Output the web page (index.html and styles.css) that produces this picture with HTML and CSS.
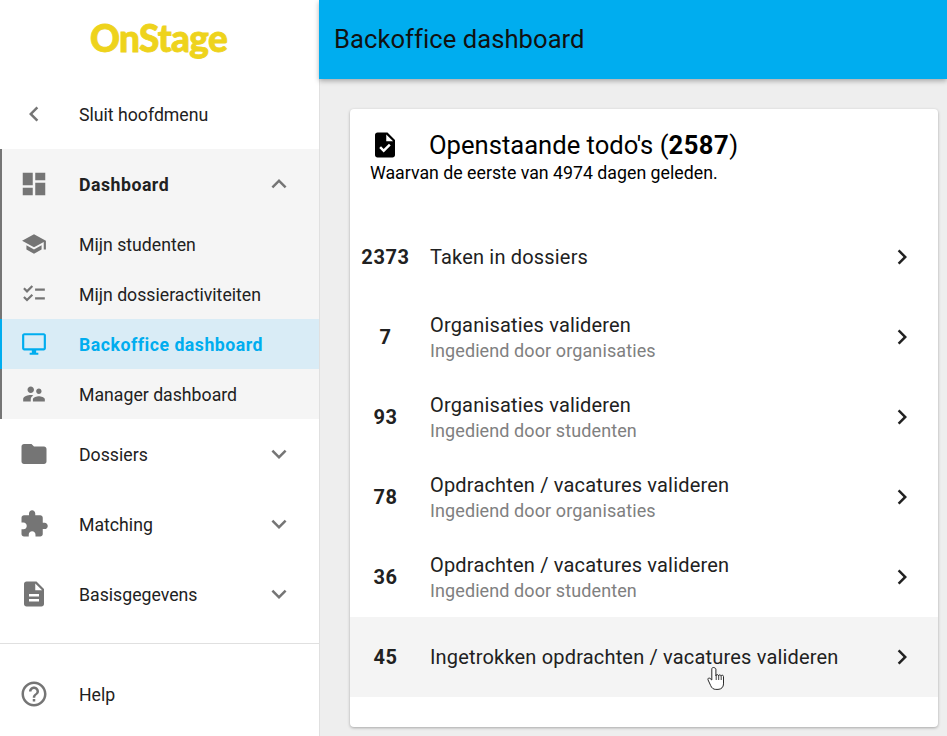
FILE: index.html
```html
<!DOCTYPE html>
<html lang="nl">
<head>
<meta charset="utf-8">
<title>Backoffice dashboard</title>
<link rel="stylesheet" href="styles.css">
</head>
<body>
<div class="app">
  <aside class="sidebar">
    <div class="logo"><span class="logo-text">OnStage</span></div>
    <a class="nav-item top"><span class="ico"><svg viewBox="0 0 24 24"><path d="M15.41 7.41L14 6l-6 6 6 6 1.41-1.41L10.83 12z"/></svg></span><span class="label">Sluit hoofdmenu</span></a>
    <div class="group">
      <a class="nav-item top"><span class="ico"><svg viewBox="0 0 24 24"><path d="M3 13h8V3H3v10zm0 8h8v-6H3v6zm10 0h8V11h-8v10zm0-18v6h8V3h-8z"/></svg></span><span class="label strong">Dashboard</span><span class="caret"><svg viewBox="0 0 24 24"><path d="M12 8l-6 6 1.41 1.41L12 10.83l4.59 4.58L18 14z"/></svg></span></a>
      <a class="nav-item sub"><span class="ico small"><svg viewBox="0 0 24 24"><path d="M5 13.18v4L12 21l7-3.82v-4L12 17l-7-3.82zM12 3L1 9l11 6 9-4.91V17h2V9L12 3z"/></svg></span><span class="label">Mijn studenten</span></a>
      <a class="nav-item sub"><span class="ico small"><svg viewBox="0 0 24 24"><path d="M22 7h-9v2h9V7zM22 15h-9v2h9v-2zM5.54 11L2 7.46l1.41-1.41 2.12 2.12 4.24-4.24 1.41 1.41L5.54 11zM5.54 19L2 15.46l1.41-1.41 2.12 2.12 4.24-4.24 1.41 1.41L5.54 19z"/></svg></span><span class="label">Mijn dossieractiviteiten</span></a>
      <a class="nav-item sub active"><span class="ico small"><svg viewBox="0 0 24 24"><path d="M21 2H3c-1.1 0-2 .9-2 2v12c0 1.1.9 2 2 2h7v2H8v2h8v-2h-2v-2h7c1.1 0 2-.9 2-2V4c0-1.1-.9-2-2-2zm0 14H3V4h18v12z"/></svg></span><span class="label strong">Backoffice dashboard</span></a>
      <a class="nav-item sub"><span class="ico small"><svg viewBox="0 0 24 24"><path d="M16.5 12c1.38 0 2.49-1.12 2.49-2.5S17.88 7 16.5 7C15.12 7 14 8.12 14 9.5s1.12 2.5 2.5 2.5zM9 11c1.66 0 2.99-1.34 2.99-3S10.66 5 9 5C7.34 5 6 6.34 6 8s1.34 3 3 3zm7.5 3c-1.83 0-5.5.92-5.5 2.75V19h11v-2.25c0-1.83-3.67-2.75-5.5-2.75zM9 13c-2.33 0-7 1.17-7 3.5V19h7v-2.25c0-.85.33-2.34 2.37-3.47C10.5 13.1 9.66 13 9 13z"/></svg></span><span class="label">Manager dashboard</span></a>
    </div>
    <a class="nav-item top"><span class="ico"><svg viewBox="0 0 24 24"><path d="M10 4H4c-1.1 0-1.99.9-1.99 2L2 18c0 1.1.9 2 2 2h16c1.1 0 2-.9 2-2V8c0-1.1-.9-2-2-2h-8l-2-2z"/></svg></span><span class="label">Dossiers</span><span class="caret"><svg viewBox="0 0 24 24"><path d="M16.59 8.59L12 13.17 7.41 8.59 6 10l6 6 6-6z"/></svg></span></a>
    <a class="nav-item top"><span class="ico"><svg viewBox="0 0 24 24"><path d="M20.5 11H19V7c0-1.1-.9-2-2-2h-4V3.5C13 2.12 11.88 1 10.5 1S8 2.12 8 3.5V5H4c-1.1 0-1.99.9-1.99 2v3.8H3.5c1.49 0 2.7 1.21 2.7 2.7s-1.21 2.7-2.7 2.7H2V20c0 1.1.9 2 2 2h3.8v-1.5c0-1.49 1.21-2.7 2.7-2.7 1.49 0 2.7 1.21 2.7 2.7V22H17c1.1 0 2-.9 2-2v-4h1.5c1.38 0 2.5-1.12 2.5-2.5S21.88 11 20.5 11z"/></svg></span><span class="label">Matching</span><span class="caret"><svg viewBox="0 0 24 24"><path d="M16.59 8.59L12 13.17 7.41 8.59 6 10l6 6 6-6z"/></svg></span></a>
    <a class="nav-item top"><span class="ico"><svg viewBox="0 0 24 24"><path d="M14 2H6c-1.1 0-1.99.9-1.99 2L4 20c0 1.1.89 2 1.99 2H18c1.1 0 2-.9 2-2V8l-6-6zm2 16H8v-2h8v2zm0-4H8v-2h8v2zm-3-5V3.5L18.5 9H13z"/></svg></span><span class="label">Basisgegevens</span><span class="caret"><svg viewBox="0 0 24 24"><path d="M16.59 8.59L12 13.17 7.41 8.59 6 10l6 6 6-6z"/></svg></span></a>
    <div class="divider"></div>
    <a class="nav-item top"><span class="ico"><svg viewBox="0 0 24 24"><path d="M11 18h2v-2h-2v2zm1-16C6.48 2 2 6.48 2 12s4.48 10 10 10 10-4.48 10-10S17.52 2 12 2zm0 18c-4.41 0-8-3.59-8-8s3.59-8 8-8 8 3.59 8 8-3.59 8-8 8zm0-14c-2.21 0-4 1.79-4 4h2c0-1.1.9-2 2-2s2 .9 2 2c0 2-3 1.75-3 5h2c0-2.25 3-2.5 3-5 0-2.21-1.79-4-4-4z"/></svg></span><span class="label">Help</span></a>
  </aside>
  <div class="main">
    <header class="topbar"><h1 class="page-title">Backoffice dashboard</h1></header>
    <div class="content">
      <section class="card">
        <div class="card-head">
          <div class="head-line">
            <span class="head-ico"><svg viewBox="0 0 24 24"><path d="M14 2H6c-1.1 0-1.99.9-1.99 2L4 20c0 1.1.89 2 1.99 2H18c1.1 0 2-.9 2-2V8l-6-6zm-3.06 16L7.4 14.46l1.41-1.41 2.12 2.12 4.24-4.24 1.41 1.41L10.94 18zM13 9V3.5L18.5 9H13z"/></svg></span>
            <h2 class="card-title">Openstaande todo's (<b>2587</b>)</h2>
          </div>
          <p class="card-sub">Waarvan de eerste van 4974 dagen geleden.</p>
        </div>
        <div class="rows">
          <a class="row"><span class="count">2373</span><span class="text"><span class="row-title">Taken in dossiers</span></span><span class="chev"><svg viewBox="0 0 24 24"><path d="M10 6L8.59 7.41 13.17 12l-4.58 4.59L10 18l6-6z"/></svg></span></a>
          <a class="row"><span class="count">7</span><span class="text"><span class="row-title">Organisaties valideren</span><span class="row-sub">Ingediend door organisaties</span></span><span class="chev"><svg viewBox="0 0 24 24"><path d="M10 6L8.59 7.41 13.17 12l-4.58 4.59L10 18l6-6z"/></svg></span></a>
          <a class="row"><span class="count">93</span><span class="text"><span class="row-title">Organisaties valideren</span><span class="row-sub">Ingediend door studenten</span></span><span class="chev"><svg viewBox="0 0 24 24"><path d="M10 6L8.59 7.41 13.17 12l-4.58 4.59L10 18l6-6z"/></svg></span></a>
          <a class="row"><span class="count">78</span><span class="text"><span class="row-title">Opdrachten / vacatures valideren</span><span class="row-sub">Ingediend door organisaties</span></span><span class="chev"><svg viewBox="0 0 24 24"><path d="M10 6L8.59 7.41 13.17 12l-4.58 4.59L10 18l6-6z"/></svg></span></a>
          <a class="row"><span class="count">36</span><span class="text"><span class="row-title">Opdrachten / vacatures valideren</span><span class="row-sub">Ingediend door studenten</span></span><span class="chev"><svg viewBox="0 0 24 24"><path d="M10 6L8.59 7.41 13.17 12l-4.58 4.59L10 18l6-6z"/></svg></span></a>
          <a class="row hover"><span class="count">45</span><span class="text"><span class="row-title">Ingetrokken opdrachten / vacatures valideren</span></span><span class="chev"><svg viewBox="0 0 24 24"><path d="M10 6L8.59 7.41 13.17 12l-4.58 4.59L10 18l6-6z"/></svg></span>
            <svg class="cursor" viewBox="0 0 18 23"><path d="M6.2.5c-.9 0-1.4.7-1.4 1.6V13L3 11.4c-1-.9-2.6 0-2 1.4l2.6 5.6c1 2.6 2.8 4 5.2 4h2.2c3.4 0 5.5-2.4 5.5-5.5V9.5c0-1.6-2.3-1.8-2.5-.3 0-1.6-2.4-1.8-2.5-.3 0-1.6-2.6-1.7-2.6-.2V2.1C8.9 1.2 7.2.5 6.2.5z" fill="#fff" stroke="#2a2a2a" stroke-width="1"/><path d="M9.2 8v5M11.7 8.5V13M14.2 9.2V13" fill="none" stroke="#2a2a2a" stroke-width=".9"/></svg>
          </a>
        </div>
      </section>
    </div>
  </div>
</div>
</body>
</html>
```
FILE: styles.css
```css
* { box-sizing: border-box; }
html, body { margin: 0; height: 100%; }
body { font-family: Roboto, "Liberation Sans", sans-serif; color: #212121; background: #eeeeee; overflow: hidden; }
.app { display: flex; height: 736px; }
.sidebar { width: 320px; flex: none; background: #fff; border-right: 1px solid #e0e0e0; display: flex; flex-direction: column; }
.logo { height: 79px; display: flex; align-items: center; justify-content: center; padding: 0 2px 5px 0; }
.logo-text { font-family: Lato, sans-serif; font-weight: 900; font-size: 37px; line-height: 1; letter-spacing: -.7px; color: #eed31c; -webkit-text-stroke: .8px #eed31c; }
.nav-item { display: flex; align-items: center; padding-left: 19px; font-size: 17.7px; }
.nav-item.top { height: 70px; }
.nav-item.sub { height: 50px; }
.group { background: #f5f5f5; border-left: 2px solid #757575; }
.group .nav-item { margin-left: -2px; }
.ico { width: 30px; height: 30px; flex: none; margin-right: 30px; display: flex; align-items: center; justify-content: center; }
.ico svg { width: 30px; height: 30px; fill: #757575; display: block; }
.ico.small svg { width: 26px; height: 26px; }
.label { flex: 1; white-space: nowrap; padding-top: 2px; }
.label.strong { font-weight: 700; letter-spacing: .5px; }
.caret { width: 30px; height: 30px; flex: none; margin-right: 25px; }
.caret svg { width: 30px; height: 30px; fill: #757575; display: block; }
.nav-item.active { background: #d9ecf6; color: #00adef; border-left: 2px solid #00adef; padding-left: 17px; }
.nav-item.active .label { color: #00adef; }
.nav-item.active svg { fill: #00adef; }
.divider { height: 1px; background: #e0e0e0; margin-top: 14px; margin-bottom: 15px; }
.main { flex: 1; min-width: 0; display: flex; flex-direction: column; }
.topbar { height: 79px; margin-left: -1px; background: #00adef; display: flex; align-items: center; padding: 0 0 2px 15px; box-shadow: 0 2px 5px rgba(0,0,0,.3); position: relative; }
.page-title { margin: 0; font-size: 25.6px; font-weight: 400; letter-spacing: .05px; color: #111; }
.content { padding: 30px 9px 0 30px; }
.card { background: #fff; border-radius: 4px; height: 618px; box-shadow: 0 1px 3px rgba(0,0,0,.3); }
.card-head { height: 108px; padding: 20px 0 0 20px; color: #000; }
.head-line { display: flex; align-items: center; height: 32px; }
.head-ico { width: 30px; height: 30px; flex: none; margin-right: 29px; }
.head-ico svg { width: 30px; height: 30px; fill: #000; display: block; }
.card-title { margin: 0; padding-bottom: 1px; font-size: 25.6px; font-weight: 400; }
.card-title b { font-weight: 700; letter-spacing: .5px; }
.card-sub { margin: 1px 0 0; font-size: 17.75px; line-height: 22px; }
.rows { display: flex; flex-direction: column; }
.row { height: 80px; display: flex; align-items: center; position: relative; }
.row.hover { background: #f4f4f4; }
.count { width: 70px; flex: none; text-align: center; font-size: 20px; font-weight: 700; letter-spacing: .6px; padding-left: 1px; }
.text { margin-left: 10px; flex: 1; display: flex; flex-direction: column; }
.row-title { font-size: 20px; line-height: 26px; letter-spacing: .18px; }
.row-sub { font-size: 18px; line-height: 24px; letter-spacing: .1px; color: #808080; padding-top: 1px; }
.chev { width: 30px; height: 30px; flex: none; margin-right: 21px; }
.chev svg { width: 30px; height: 30px; fill: #212121; display: block; }
.cursor { position: absolute; left: 357px; top: 50px; width: 18px; height: 23px; }
```
